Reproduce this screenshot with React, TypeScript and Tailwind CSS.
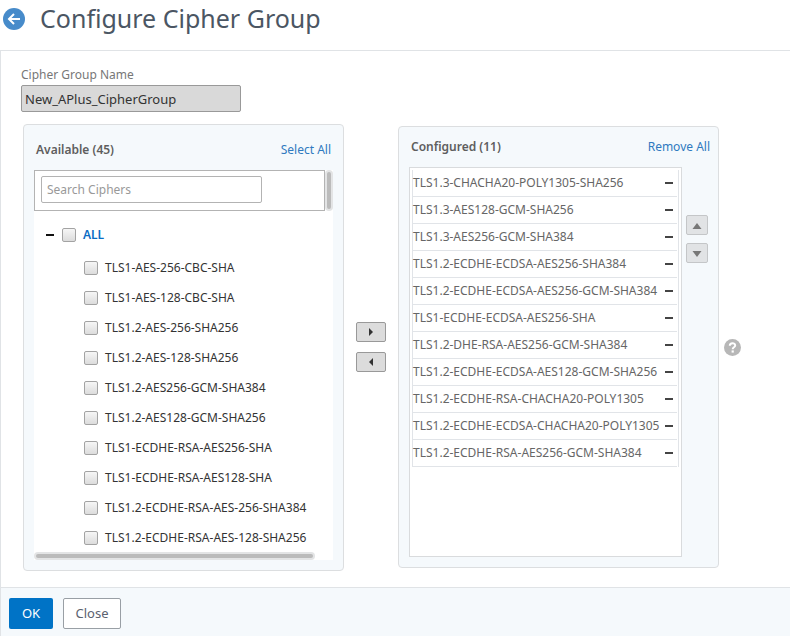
import { useState } from "react";

const available = [
  "TLS1-AES-256-CBC-SHA",
  "TLS1-AES-128-CBC-SHA",
  "TLS1.2-AES-256-SHA256",
  "TLS1.2-AES-128-SHA256",
  "TLS1.2-AES256-GCM-SHA384",
  "TLS1.2-AES128-GCM-SHA256",
  "TLS1-ECDHE-RSA-AES256-SHA",
  "TLS1-ECDHE-RSA-AES128-SHA",
  "TLS1.2-ECDHE-RSA-AES-256-SHA384",
  "TLS1.2-ECDHE-RSA-AES-128-SHA256",
];

const configured = [
  "TLS1.3-CHACHA20-POLY1305-SHA256",
  "TLS1.3-AES128-GCM-SHA256",
  "TLS1.3-AES256-GCM-SHA384",
  "TLS1.2-ECDHE-ECDSA-AES256-SHA384",
  "TLS1.2-ECDHE-ECDSA-AES256-GCM-SHA384",
  "TLS1-ECDHE-ECDSA-AES256-SHA",
  "TLS1.2-DHE-RSA-AES256-GCM-SHA384",
  "TLS1.2-ECDHE-ECDSA-AES128-GCM-SHA256",
  "TLS1.2-ECDHE-RSA-CHACHA20-POLY1305",
  "TLS1.2-ECDHE-ECDSA-CHACHA20-POLY1305",
  "TLS1.2-ECDHE-RSA-AES256-GCM-SHA384",
];

const checkbox =
  "size-3.5 shrink-0 appearance-none rounded-xs border border-[#a3a3a3] bg-linear-to-b from-[#f6f6f6] to-[#dcdcdc] checked:from-[#0073c6] checked:to-[#0073c6]";

function MinusIcon({ color }: { color: string }) {
  return (
    <svg width="8" height="2" viewBox="0 0 8 2" aria-hidden="true">
      <rect width="8" height="2" fill={color} />
    </svg>
  );
}

function TransferButton({ label, points }: { label: string; points: string }) {
  return (
    <button
      type="button"
      aria-label={label}
      className="flex h-5 w-[30px] items-center justify-center rounded-xs border border-[#999] bg-[#dcdcdc]"
    >
      <svg width="8" height="8" viewBox="0 0 8 8" aria-hidden="true">
        <polygon points={points} fill="#333" />
      </svg>
    </button>
  );
}

function OrderButton({ label, points }: { label: string; points: string }) {
  return (
    <button
      type="button"
      aria-label={label}
      className="flex h-5 w-[22px] items-center justify-center rounded-xs border border-[#c4c6c8] bg-[#e1e3e5]"
    >
      <svg width="10" height="8" viewBox="0 0 10 8" aria-hidden="true">
        <polygon points={points} fill="#777" />
      </svg>
    </button>
  );
}

function AvailablePanel() {
  const [picked, setPicked] = useState<string[]>([]);
  const toggle = (name: string) =>
    setPicked((p) => (p.includes(name) ? p.filter((n) => n !== name) : [...p, name]));

  return (
    <section className="w-[321px] shrink-0 rounded-sm border border-[#dcdee0] bg-[#f5f9fc] px-2.5 pb-2.5">
      <div className="flex h-[45px] items-center justify-between pt-1 pr-0.5 pl-0.5">
        <h2 className="text-xs font-semibold text-[#5e5e5e]">Available (45)</h2>
        <button type="button" className="text-xs text-[#2f7ac0]" onClick={() => setPicked(available)}>
          Select All
        </button>
      </div>
      <div className="bg-white">
        <div className="flex">
          <div className="flex-1 border border-[#b3b3b3] px-1.5 pt-[5px] pb-[7px]">
            <input
              type="text"
              aria-label="Search Ciphers"
              placeholder="Search Ciphers"
              className="block h-[27px] w-[221px] rounded-xs border border-[#b3b3b3] px-[5px] text-xs text-[#333] placeholder:text-[#999]"
            />
          </div>
          <div className="w-2 rounded-full bg-[#e3e4e5] p-0.5">
            <div className="h-full rounded-full bg-[#bbb]" />
          </div>
        </div>
        <div className="flex h-12 items-center gap-2 pl-3">
          <button type="button" aria-label="Collapse ALL">
            <MinusIcon color="#111" />
          </button>
          <label className="flex items-center gap-[7px] text-xs font-semibold text-[#0a6cc4]">
            <input type="checkbox" className={checkbox} />
            ALL
          </label>
        </div>
        <ul className="-mt-1.5 -mb-px pl-[50px]">
          {available.map((name) => (
            <li key={name} className="flex h-[30px] items-center">
              <label className="flex items-center gap-[7px] text-xs whitespace-nowrap text-[#333]">
                <input
                  type="checkbox"
                  className={checkbox}
                  checked={picked.includes(name)}
                  onChange={() => toggle(name)}
                />
                {name}
              </label>
            </li>
          ))}
        </ul>
        <div className="h-2 w-[281px] rounded-full bg-[#e3e4e5] p-0.5">
          <div className="h-full rounded-full bg-[#bbb]" />
        </div>
      </div>
    </section>
  );
}

function ConfiguredPanel() {
  return (
    <section className="mt-0.5 w-[321px] shrink-0 self-start rounded-sm border border-[#dcdee0] bg-[#f5f9fc] pr-2 pb-2.5 pl-2.5">
      <div className="flex h-10 items-center justify-between pl-0.5">
        <h2 className="text-xs font-semibold text-[#5e5e5e]">Configured (11)</h2>
        <button type="button" className="text-xs text-[#2f7ac0]">
          Remove All
        </button>
      </div>
      <div className="flex justify-between">
        <div className="h-[390px] w-[273px] border border-[#d9dbdd] bg-white p-0.5">
          <ul className="border-x border-[#e1e4e8] pr-px">
            {configured.map((name) => (
              <li
                key={name}
                className="flex h-[27px] items-center justify-between border-b border-[#e1e4e8] pr-1 text-xs whitespace-nowrap text-[#666]"
              >
                {name}
                <button type="button" aria-label={`Remove ${name}`}>
                  <MinusIcon color="#444" />
                </button>
              </li>
            ))}
          </ul>
        </div>
        <div className="flex flex-col gap-2 pt-12 pr-0.5">
          <OrderButton label="Move up" points="5,2 9.5,8 0.5,8" />
          <OrderButton label="Move down" points="0.5,2 9.5,2 5,8" />
        </div>
      </div>
    </section>
  );
}

export default function App() {
  return (
    <div className="flex min-h-screen flex-col bg-white font-['Noto_Sans',sans-serif]">
      <header className="flex h-[50px] items-center gap-[15px] pb-3 pl-[3px]">
        <button type="button" aria-label="Back">
          <svg width="22" height="22" viewBox="0 0 22 22" aria-hidden="true">
            <circle cx="11" cy="11" r="11" fill="#478bca" />
            <path d="M17 11H6.5M11 6L6 11l5 5" fill="none" stroke="#fff" strokeWidth="2" />
          </svg>
        </button>
        <h1 className="pb-0.5 text-[25px] leading-9 whitespace-nowrap text-[#4b5663]">
          Configure Cipher Group
        </h1>
      </header>
      <main className="border-t border-l border-[#e0e3e6] px-5 pt-3.5 pb-4">
        <label htmlFor="group-name" className="block text-xs leading-5 text-[#777]">
          Cipher Group Name
        </label>
        <input
          id="group-name"
          type="text"
          readOnly
          value="New_APlus_CipherGroup"
          className="block h-[27px] w-[220px] rounded-xs border border-[#999] bg-[#d9d9d9] px-[3px] text-[13px] text-[#333]"
        />
        <div className="flex items-center pt-3 pl-0.5">
          <AvailablePanel />
          <div className="flex flex-col gap-2.5 px-3 pb-0.5">
            <TransferButton label="Add selected" points="2,0 6,4 2,8" />
            <TransferButton label="Remove selected" points="6,0 2,4 6,8" />
          </div>
          <ConfiguredPanel />
          <button type="button" aria-label="Help" className="pl-[5px]">
            <svg width="17" height="17" viewBox="0 0 17 17" aria-hidden="true">
              <circle cx="8.5" cy="8.5" r="8.5" fill="#b7b7b7" />
              <path
                d="M5.8 6.8C5.8 3.4 11.2 3.5 11.2 6.5C11.2 8.3 8.7 8.2 8.7 10.2"
                fill="none"
                stroke="#fff"
                strokeWidth="2"
              />
              <rect x="7.6" y="11.4" width="2.2" height="2.2" fill="#fff" />
            </svg>
          </button>
        </div>
      </main>
      <footer className="flex flex-1 items-start gap-2.5 border-t border-l border-[#e0e3e6] bg-[#f5f9fc] px-2 pt-2.5 pb-1.5">
        <button type="button" className="h-[31px] w-11 rounded-xs bg-[#0073c6] text-[13px] text-white">
          OK
        </button>
        <button
          type="button"
          className="h-[31px] w-[58px] rounded-xs border border-[#999fa5] bg-white text-[13px] text-[#5b6270]"
        >
          Close
        </button>
      </footer>
    </div>
  );
}
